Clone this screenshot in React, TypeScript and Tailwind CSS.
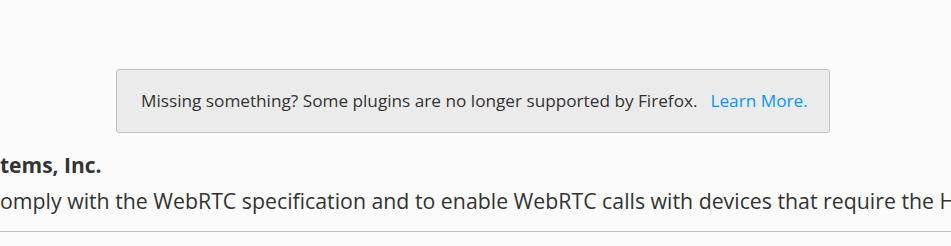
export default function App() {
  return (
    <div className="w-[951px] h-[246px] overflow-hidden bg-[#fbfbfb] text-[#333333]" style={{ fontFamily: '"Open Sans", "Noto Sans", sans-serif' }}>
      <div className="pt-[69px]">
        <div className="ml-[116px] w-[714px] h-[64px] box-border rounded-[3px] border border-[#c1c1c1] bg-[#ebebeb] flex items-center pl-[24px] text-[17.2px] leading-[24px]">
          <span>Missing something? Some plugins are no longer supported by Firefox.</span>
          <a className="ml-[13px] text-[#0996f8]" href="#">Learn More.</a>
        </div>
      </div>
      <div className="mt-[20px] whitespace-nowrap">
        <div className="text-[21px] font-bold leading-[24px]">tems, Inc.</div>
        <div className="text-[21.3px] leading-[28px] mt-[10px]">omply with the WebRTC specification and to enable WebRTC calls with devices that require the H</div>
        <div className="mt-[16px] h-px bg-[#c1c1c1]" />
      </div>
    </div>
  );
}
